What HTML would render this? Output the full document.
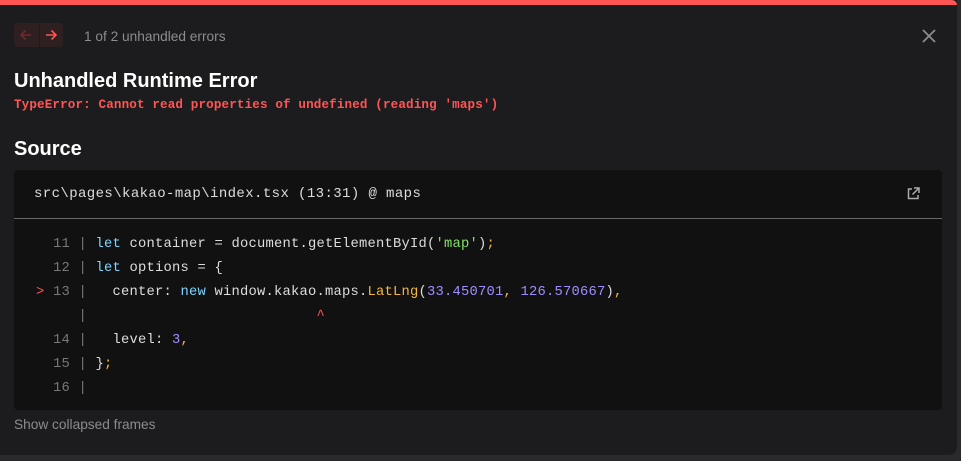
<!DOCTYPE html>
<html><head><meta charset="utf-8"><style>
body{margin:0;width:961px;height:461px;background:#2a2a2d;overflow:hidden;font-family:"Liberation Sans",sans-serif;}
.d{position:absolute;left:0;top:0;width:957px;height:455px;background:#1c1c1e;border-radius:0 0 8px 0;overflow:hidden}
.bar{position:absolute;left:0;top:0;width:957px;height:5px;background:#ff5555;border-radius:0 6px 0 0}
.nav{position:absolute;left:14px;top:23px;width:49px;height:24px;background:#2e1f20;border-radius:4px}
.nav div{position:absolute;top:0;width:1px;height:24px;left:25px;background:#1c1c1e}
.cnt{position:absolute;left:84px;top:29px;font-size:13.7px;color:#8b8b90}
.x{position:absolute;left:921px;top:28px}
h1{position:absolute;left:14px;top:70px;margin:0;font-size:20px;color:#fff;font-weight:bold}
.te{position:absolute;left:14px;top:98px;font:bold 12.6px "Liberation Mono",monospace;letter-spacing:0.13px;color:#ff5555}
h2{position:absolute;left:14px;top:138px;margin:0;font-size:20px;color:#fff;font-weight:bold}
.code{position:absolute;left:14px;top:170px;width:928px;height:240px;background:#111112;border-radius:4px}
.fn{position:absolute;left:20px;top:16px;font:14px "Liberation Mono",monospace;letter-spacing:0.4px;color:#ddd}
.hr{position:absolute;left:0;top:48px;width:928px;height:1px;background:#666}
pre{position:absolute;left:5px;top:63px;margin:0;font:13.8px/24px "Liberation Mono",monospace;letter-spacing:0.22px;color:#ddd}
.g{color:#777}.k{color:#7fd4ff}.s{color:#86e06a}.n{color:#a18cff}.f{color:#f5b63d}.r{color:#ff5555}.p{color:#f5b63d}
.sc{position:absolute;left:14px;top:417px;font-size:13.7px;color:#8b8b90}
</style></head><body>
<div class="d">
<div class="bar"></div>
<div class="nav"><div></div>
<svg style="position:absolute;left:5px;top:5px" width="14" height="14" viewBox="0 0 14 14"><path d="M12 7H2M6.5 2.5L2 7l4.5 4.5" stroke="#6e2a2c" stroke-width="1.6" fill="none"/></svg>
<svg style="position:absolute;left:30px;top:5px" width="14" height="14" viewBox="0 0 14 14"><path d="M2 7h10M7.5 2.5L12 7l-4.5 4.5" stroke="#ff5555" stroke-width="1.6" fill="none"/></svg>
</div>
<div class="cnt">1 of 2 unhandled errors</div>
<svg class="x" width="16" height="16" viewBox="0 0 16 16"><path d="M2 2l12 12M14 2L2 14" stroke="#8b8b90" stroke-width="1.8"/></svg>
<h1>Unhandled Runtime Error</h1>
<div class="te">TypeError: Cannot read properties of undefined (reading 'maps')</div>
<h2>Source</h2>
<div class="code">
<div class="fn">src\pages\kakao-map\index.tsx (13:31) @ maps</div>
<svg style="position:absolute;left:892px;top:16px" width="15" height="15" viewBox="0 0 15 15"><path d="M6 3H2.5v9.5H12V9M8 2h5v5M13 2L6.5 8.5" stroke="#aaa" stroke-width="1.5" fill="none"/></svg>
<div class="hr"></div>
<pre><span class="g">    11 | </span><span class="k">let</span> container = document.getElementById(<span class="s">'map'</span>)<span class="p">;</span>
<span class="g">    12 | </span><span class="k">let</span> options = {
<span class="r">  &gt;</span><span class="g"> 13 | </span>  center: <span class="k">new</span> window.kakao.maps.<span class="f">LatLng</span>(<span class="n">33.450701</span><span class="p">,</span> <span class="n">126.570667</span>)<span class="p">,</span>
<span class="g">       | </span>                          <span class="r">^</span>
<span class="g">    14 | </span>  level: <span class="n">3</span><span class="p">,</span>
<span class="g">    15 | </span>}<span class="p">;</span>
<span class="g">    16 | </span></pre>
</div>
<div class="sc">Show collapsed frames</div>
</div>
</body></html>
